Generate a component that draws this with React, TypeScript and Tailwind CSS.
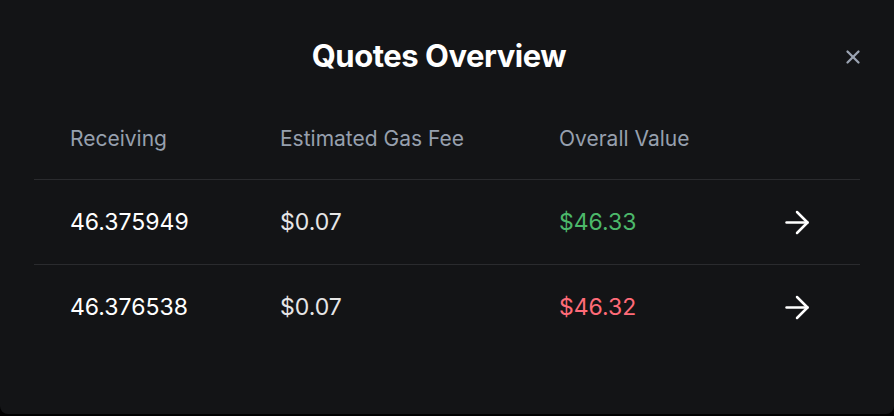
import { X } from "lucide-react";

const quotes = [
  { receiving: "46.375949", gas: "$0.07", value: "$46.33", good: true },
  { receiving: "46.376538", gas: "$0.07", value: "$46.32", good: false },
];

function Arrow() {
  return (
    <svg width="25" height="25" viewBox="0 0 25 25" fill="none" stroke="white" strokeWidth="2.5" strokeLinecap="round" strokeLinejoin="round">
      <path d="M1.5 12.5h21" />
      <path d="M12 2l10.5 10.5L12 23" />
    </svg>
  );
}

export default function App() {
  return (
    <div className="w-[894px] h-[416px] bg-black font-['Inter',sans-serif]">
      <div className="relative h-[414px] bg-[#131416] rounded-b-lg">
        <div className="flex items-center justify-center pt-[36px] h-[76px] pr-[16px]">
          <h1 className="text-[31px] font-bold text-white tracking-[-0.015em]">
            Quotes Overview
          </h1>
        </div>
        <button className="absolute right-[30px] top-[46px] text-[#9aa3b1]">
          <X size={22} strokeWidth={2.5} />
        </button>

        <div className="mx-[34px] mt-[38px]">
          <div className="grid grid-cols-[210px_279px_1fr] pl-[36px] h-[66px] items-start pt-[9px] text-[21px] text-[#97a0ae] border-b border-[#2a2b2e]">
            <span>Receiving</span>
            <span>Estimated Gas Fee</span>
            <span>Overall Value</span>
          </div>
          {quotes.map((q, i) => (
            <div
              key={i}
              className={
                "grid grid-cols-[210px_279px_1fr_auto] items-center pl-[36px] pr-[50px] h-[85px] text-[23px] " +
                (i === 0 ? "border-b border-[#2a2b2e]" : "")
              }
            >
              <span className="text-white">{q.receiving}</span>
              <span className="text-[#e6e6e6]">{q.gas}</span>
              <span className={q.good ? "text-[#4cb86a]" : "text-[#ff6b78]"}>
                {q.value}
              </span>
              <Arrow />
            </div>
          ))}
        </div>
      </div>
    </div>
  );
}
